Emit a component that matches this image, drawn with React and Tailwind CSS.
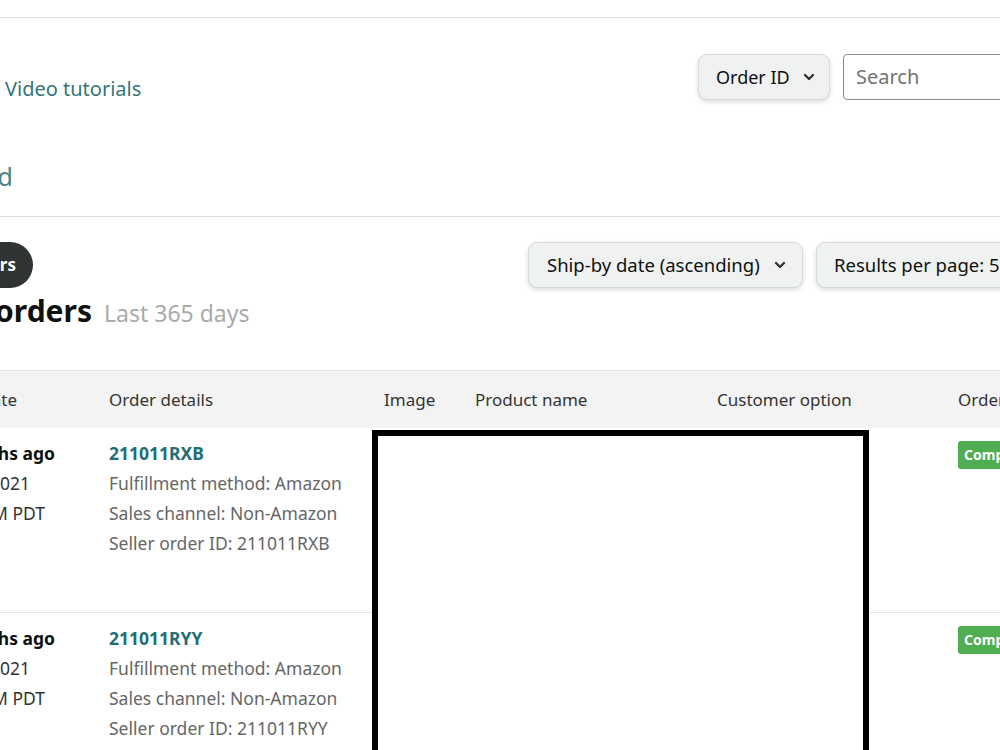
import React from 'react';

const Chevron = () => (
    <svg width="16" height="16" viewBox="0 0 24 24" fill="none" stroke="#333" strokeWidth="3.5" strokeLinecap="round" strokeLinejoin="round">
        <path d="M6 9l6 6 6-6" />
    </svg>
);

// text whose start runs off the left edge of the page: only its tail is shown
const Tail = ({ width, children }) => (
    <div className={`flex justify-end shrink-0 ${width}`}>
        <span className="whitespace-nowrap">{children}</span>
    </div>
);

const orders = [
    { age: '4 months ago', date: 'Oct 11, 2021', time: '10:46 AM PDT', id: '211011RXB' },
    { age: '4 months ago', date: 'Oct 11, 2021', time: '10:31 AM PDT', id: '211011RYY' },
];

const OrderRow = ({ order }) => (
    <div className="grid grid-cols-[109px_275px_91px_242px_241px_1fr] h-[185px] border-b border-[#e3e6e6] pt-[10px] text-[17.5px] leading-[30px]">
        <div className="flex flex-col">
            <div className="font-bold text-[#0f1111]"><Tail width="w-[55px]">{order.age}</Tail></div>
            <div className="text-[#333]"><Tail width="w-[30px]">{order.date}</Tail></div>
            <div className="text-[#333]"><Tail width="w-[45px]">{order.time}</Tail></div>
        </div>
        <div className="flex flex-col whitespace-nowrap">
            <span className="font-bold text-[#1f6f75]">{order.id}</span>
            <span className="text-[#666]">Fulfillment method: Amazon</span>
            <span className="text-[#666]">Sales channel: Non-Amazon</span>
            <span className="text-[#666]">Seller order ID: {order.id}</span>
        </div>
        <div></div>
        <div></div>
        <div></div>
        <div>
            <span className="inline-block whitespace-nowrap rounded-[3px] bg-[#4fae52] px-[6px] text-[14px] leading-[28px] font-bold text-white">Completed</span>
        </div>
    </div>
);

const App = () => {
    return (
        <div className="relative w-[1000px] h-[750px] overflow-hidden bg-white font-['Noto_Sans',sans-serif] text-[#0f1111]">
            {/* Page header: help links and search */}
            <div className="mt-[17px] h-[200px] border-t border-b border-[#dddddd] flex">
                <div className="w-[698px] shrink-0 flex flex-col">
                    <span className="pl-[5px] pt-[57px] text-[20px] leading-[28px] text-[#35757a]">Video tutorials</span>
                    <div className="mt-[55px] text-[25px] leading-[36px] text-[#4d8488]">
                        <Tail width="w-[13px]">Shipped</Tail>
                    </div>
                </div>
                <div className="pt-[36px] flex gap-[13px] shrink-0">
                    <button className="flex items-center gap-[11px] h-[46px] w-[132px] pl-[17px] rounded-[9px] border border-[#d5d9d9] bg-[#f0f2f2] shadow-[0_2px_5px_rgba(15,17,17,0.15)] text-[18px] text-[#0f1111] whitespace-nowrap">
                        Order ID <Chevron />
                    </button>
                    <div className="flex items-center h-[46px] w-[220px] pl-[12px] rounded-[4px] border border-[#888c8c] text-[20px] text-[#6f7373]">
                        Search
                    </div>
                </div>
            </div>

            {/* Filters, title and sort */}
            <div className="flex h-[153px] pt-[25px]">
                <div className="w-[528px] shrink-0 flex flex-col">
                    <div className="flex justify-end w-[33px] h-[46px] items-center rounded-r-full bg-[#303333] pr-[17px] text-[17px] font-bold text-white">
                        <span className="whitespace-nowrap">Filters</span>
                    </div>
                    <div className="mt-[3px] flex items-baseline">
                        <div className="text-[30px] leading-[40px] font-bold">
                            <Tail width="w-[92px]">2 orders</Tail>
                        </div>
                        <span className="ml-[12px] text-[23px] text-[#aaaaaa]">Last 365 days</span>
                    </div>
                </div>
                <div className="flex gap-[13px] shrink-0">
                    <button className="flex items-center gap-[12px] h-[46px] w-[275px] pl-[18px] rounded-[9px] border border-[#d5d9d9] bg-[#f0f2f2] shadow-[0_2px_5px_rgba(15,17,17,0.15)] text-[18.5px] text-[#0f1111] whitespace-nowrap">
                        Ship-by date (ascending) <Chevron />
                    </button>
                    <button className="flex items-center gap-[12px] h-[46px] w-[240px] pl-[17px] rounded-[9px] border border-[#d5d9d9] bg-[#f0f2f2] shadow-[0_2px_5px_rgba(15,17,17,0.15)] text-[18.5px] text-[#0f1111] whitespace-nowrap">
                        Results per page: 50 <Chevron />
                    </button>
                </div>
            </div>

            {/* Orders table */}
            <div className="grid grid-cols-[109px_275px_91px_242px_241px_1fr] h-[58px] items-center border-t border-[#e3e6e6] bg-[#f3f3f3] text-[17px] text-[#333] whitespace-nowrap">
                <Tail width="w-[17px]">Ship date</Tail>
                <span>Order details</span>
                <span>Image</span>
                <span>Product name</span>
                <span>Customer option</span>
                <span>Order status</span>
            </div>
            {orders.map(order => <OrderRow key={order.id} order={order} />)}

            {/* redacted product area */}
            <div className="absolute left-[372px] top-[430px] w-[497px] h-[340px] border-[6px] border-black bg-white"></div>
        </div>
    );
};

export default App;
